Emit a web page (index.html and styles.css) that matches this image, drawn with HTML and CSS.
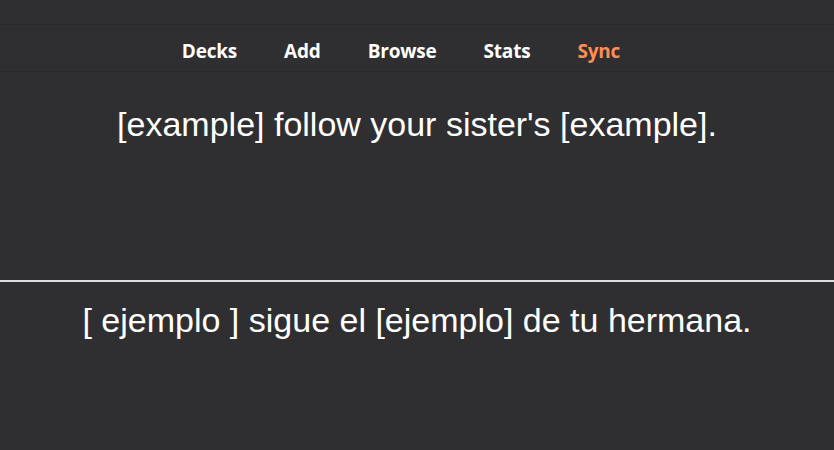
FILE: index.html
```html
<!DOCTYPE html>
<html>
<head>
<meta charset="utf-8">
<link rel="stylesheet" href="styles.css">
</head>
<body>
<div class="topstrip"></div>
<nav class="nav">
  <a class="link">Decks</a>
  <a class="link">Add</a>
  <a class="link">Browse</a>
  <a class="link">Stats</a>
  <a class="link sync">Sync</a>
</nav>
<main class="card">
  <div class="front">[example] follow your sister's [example].</div>
  <hr class="divider">
  <div class="back">[ ejemplo ] sigue el [ejemplo] de tu hermana.</div>
</main>
</body>
</html>
```
FILE: styles.css
```css
html, body {
  margin: 0;
  padding: 0;
  background: #2f2f31;
  height: 100%;
  overflow: hidden;
}
.topstrip {
  height: 24px;
  border-bottom: 1px solid #28282a;
}
.nav {
  display: flex;
  justify-content: center;
  gap: 47px;
  height: 47px;
  box-sizing: border-box;
  padding-top: 6px;
  align-items: center;
  padding-right: 32px;
  border-bottom: 1px solid #28282a;
  font-family: "Open Sans", sans-serif;
  font-weight: 700;
  font-size: 19px;
  letter-spacing: -0.2px;
}
.link {
  color: #ffffff;
}
.sync {
  color: #ff8d55;
}
.card {
  font-family: "Liberation Sans", Arial, sans-serif;
  font-size: 34px;
  color: #ffffff;
  text-align: center;
}
.front {
  padding-top: 33px;
  height: 175px;
}
.divider {
  margin: 0;
  border: 0;
  height: 2px;
  background: #dedede;
}
.back {
  padding-top: 19px;
}
```
